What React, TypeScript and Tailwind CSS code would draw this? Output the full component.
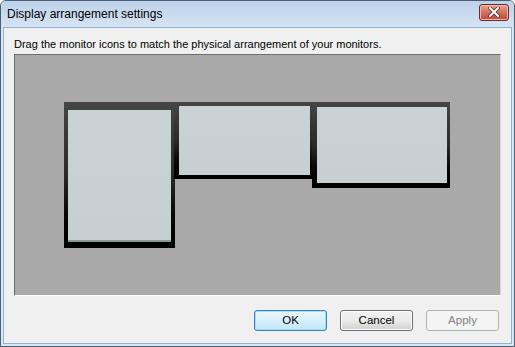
import React from "react";

const Monitor = ({
    className,
    screenClassName,
}: {
    className?: string;
    screenClassName?: string;
}) => {
    return (
        <div
            className={`absolute flex bg-gradient-to-b from-[#454545] via-[#2a2a2a] to-[#000000] ${className}`}
        >
            <div className={`flex-1 bg-gradient-to-b from-[#c9d3d5] to-[#c6d0d2] ${screenClassName}`} />
        </div>
    );
};

const Button = ({
    label,
    variant,
}: {
    label: string;
    variant: "default" | "normal" | "disabled";
}) => {
    const styles = {
        default:
            "border-[#3c7fb1] bg-gradient-to-b from-[#eaf6fd] via-[#d9f0fc] to-[#bee6fd] text-black shadow-[inset_0_0_0_1px_#a6e0f8]",
        normal:
            "border-[#707070] bg-gradient-to-b from-[#f2f2f2] via-[#ebebeb] to-[#cfcfcf] text-black shadow-[inset_0_0_0_1px_#fcfcfc]",
        disabled: "border-[#adb2b5] bg-[#f4f4f4] text-[#838383]",
    }[variant];
    return (
        <div
            className={`w-[73px] h-[21px] rounded-[3px] border flex items-center justify-center text-[11.5px] leading-none ${styles}`}
        >
            {label}
        </div>
    );
};

export default function App() {
    return (
        <div
            className="w-[515px] h-[347px] bg-[#dbe7f4] flex flex-col border border-[#4d5d70] rounded-t-[6px] overflow-hidden"
            style={{ fontFamily: '"Liberation Sans", Arial, sans-serif' }}
        >
            {/* title bar */}
            <div className="h-[26px] shrink-0 flex items-center justify-between pl-[6px] pr-[5px] bg-gradient-to-b from-[#bcd1ea] to-[#d6e4f3]">
                <span className="text-[12px] text-black leading-none pb-[1px]">Display arrangement settings</span>
                <div className="w-[30px] h-[17px] rounded-[3px] border border-[#6b2a2a] bg-gradient-to-b from-[#e8a493] via-[#d0705e] to-[#c0452f] flex items-center justify-center mb-[4px] shadow-[inset_0_0_0_1px_#f0b8ac]">
                    <svg width="12" height="10" viewBox="0 0 12 10">
                        <path d="M2 1 L10 9 M10 1 L2 9" stroke="#5a2a22" strokeWidth="3.6" strokeLinecap="square" />
                        <path d="M2 1 L10 9 M10 1 L2 9" stroke="#ffffff" strokeWidth="2" strokeLinecap="square" />
                    </svg>
                </div>
            </div>

            {/* client area */}
            <div className="flex-1 mx-[2px] mb-[2px] bg-[#f0f0f0] border border-[#8fb3d6] flex flex-col pl-[10px] pr-[11px]">
                <div className="pt-[8px] text-[11px] leading-[16px] text-black">
                    Drag the monitor icons to match the physical arrangement of your monitors.
                </div>

                <div className="mt-[2px] h-[242px] w-[487px] bg-[#a9a9a9] border-t border-l border-[#6d6d6d] border-r-[#d8d8d8] border-b-[#ffffff] border-r border-b relative">
                    <Monitor className="left-[49px] top-[47px] w-[111px] h-[146px] pt-[8px] pl-[4px] pr-[4px] pb-[6px]" screenClassName="border-b-2 border-[#8d9698]" />
                    <Monitor className="left-[159px] top-[47px] w-[139px] h-[77px] pt-[4px] pl-[5px] pr-[3px] pb-[4px]" />
                    <Monitor className="left-[297px] top-[47px] w-[138px] h-[86px] pt-[5px] pl-[5px] pr-[3px] pb-[5px]" />
                </div>

                <div className="mt-[14px] flex justify-end gap-[13px] pr-[1px]">
                    <Button label="OK" variant="default" />
                    <Button label="Cancel" variant="normal" />
                    <Button label="Apply" variant="disabled" />
                </div>
            </div>
        </div>
    );
}
